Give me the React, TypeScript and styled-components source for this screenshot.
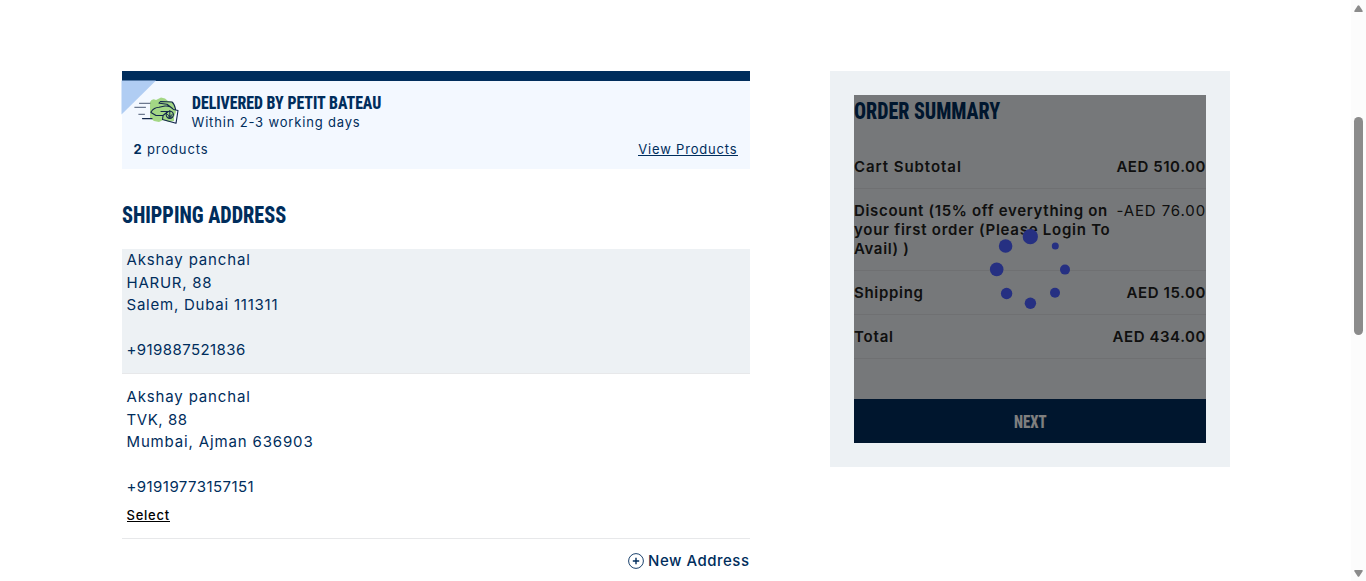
import React from 'react';
import styled, { createGlobalStyle } from 'styled-components';

const navy = '#002d5c';
const line = '#e7e8ea';

const GlobalStyle = createGlobalStyle`
  * { box-sizing: border-box; }
  body {
    margin: 0;
    background: #fff;
    color: ${navy};
    font-family: Inter, "Liberation Sans", sans-serif;
    font-size: 15px;
    overflow: hidden;
  }
`;

const Page = styled.div`
  display: flex;
  height: 581px;
  overflow: hidden;
`;

const Checkout = styled.main`
  flex: 1;
  display: flex;
  align-items: flex-start;
  gap: 80px;
  padding: 71px 0 0 122px;
`;

const Main = styled.div`
  width: 628px;
`;

const Text = styled.span<{ $track?: number }>`
  letter-spacing: ${(p) => p.$track ?? 0.7}px;
  white-space: nowrap;
`;

const Condensed = styled.span<{ $fit: number }>`
  display: inline-block;
  font-family: Roboto, "Liberation Sans", sans-serif;
  font-weight: 800;
  font-stretch: 75%;
  white-space: nowrap;
  transform: scaleX(${(p) => p.$fit});
  transform-origin: left center;
`;

const DeliveryCard = styled.section`
  position: relative;
  height: 98px;
  padding: 12px 12.5px 0 11.5px;
  border-top: 10px solid ${navy};
  background: #f3f8ff;
`;

const Corner = styled.svg`
  position: absolute;
  top: -1px;
  left: -1px;
`;

const DeliveryHead = styled.div`
  position: relative;
  display: flex;
  gap: 12px;
`;

const Truck = styled.svg`
  width: 46px;
  height: 32px;
  margin-top: 3px;
`;

const DeliveryText = styled.div`
  display: flex;
  flex-direction: column;
  font-size: 13px;
  line-height: 18px;
`;

const DeliveryTitle = styled.h3`
  margin: 0;
  font-size: 18px;
  line-height: 20px;
`;

const DeliveryFoot = styled.div`
  display: flex;
  justify-content: space-between;
  margin-top: 9px;
  font-size: 13px;
  line-height: 18px;
`;

const ProductsLink = styled.a`
  height: 16px;
  line-height: 18px;
  border-bottom: 1px solid ${navy};
`;

const Heading = styled.h2`
  margin: 0;
  height: 32px;
  font-size: 23px;
  line-height: 32px;
`;

const ShippingHeading = styled(Heading)`
  margin: 30px 0 18px;
`;

const Address = styled.article<{ $active?: boolean }>`
  display: flex;
  flex-direction: column;
  height: ${(p) => (p.$active ? 125 : 165)}px;
  padding: ${(p) => (p.$active ? 0 : 12)}px 4.5px 0;
  border-bottom: 1px solid ${line};
  background: ${(p) => (p.$active ? '#edf1f4' : 'transparent')};
  line-height: 22.5px;
`;

const Phone = styled.div`
  margin-top: 22.5px;
`;

const SelectLink = styled.a`
  align-self: flex-start;
  height: 15px;
  margin-top: 8.5px;
  border-bottom: 1px solid #000;
  color: #000;
  font-size: 13px;
  font-weight: 500;
  line-height: 17px;
`;

const NewAddress = styled.div`
  display: flex;
  justify-content: flex-end;
  align-items: center;
  gap: 4px;
  height: 22px;
  margin-top: 10px;
  padding-right: 0.5px;
  font-weight: 500;

  svg {
    margin-top: 2px;
  }
`;

const Summary = styled.aside`
  width: 400px;
  padding: 24px;
  background: #edf1f4;
`;

const SummaryBody = styled.div`
  position: relative;
  height: 348px;
`;

const Rows = styled.div`
  margin: 18px 0 40px;
`;

const Row = styled.div`
  display: flex;
  justify-content: space-between;
  padding: 12px 0;
  border-bottom: 1px solid #dfe1e4;
  color: #212121;
  font-weight: 600;
  line-height: 19px;
`;

const Label = styled.div`
  display: flex;
  flex-direction: column;
`;

const Amount = styled.div<{ $light?: boolean }>`
  font-weight: ${(p) => (p.$light ? 400 : 600)};
`;

const NextButton = styled.button`
  display: flex;
  justify-content: center;
  align-items: center;
  width: 100%;
  height: 44px;
  padding: 0 0 0 7px;
  border: 0;
  background: ${navy};
  color: #fff;
  font-size: 18px;
`;

const Loading = styled.div`
  position: absolute;
  inset: 0;
  display: flex;
  justify-content: center;
  align-items: center;
  background: rgba(0, 0, 0, 0.5);
`;

const Scrollbar = styled.div`
  display: flex;
  flex-direction: column;
  align-items: center;
  width: 15px;
  padding: 5px 0 4px;
  background: #fcfcfc;
`;

const Thumb = styled.div`
  width: 9px;
  height: 218px;
  margin: 105px 0 auto;
  border-radius: 5px;
  background: #8b8b8b;
`;

const dots = [
  [40.3, 7.7, 7.6], [65.3, 17, 3.5], [75, 40.6, 5], [65, 63.7, 5],
  [40.4, 74.3, 5.7], [16.6, 64.5, 5.7], [6.7, 40.4, 6.8], [15.6, 17, 6.8],
];

const Arrow = ({ down }: { down?: boolean }) => (
  <svg width="9" height="7" viewBox="0 0 9 7" fill="#8b8b8b">
    <path d={down ? 'M0.8 0H8.2Q9 .3 8.6 1.2L5.4 6.2Q4.5 7.4 3.6 6.2L.4 1.2Q0 .3.8 0Z' : 'M.8 7H8.2Q9 6.7 8.6 5.8L5.4.8Q4.5-.4 3.6.8L.4 5.8Q0 6.7.8 7Z'} />
  </svg>
);

const DeliveryIcon = () => (
  <Truck viewBox="0 0 46 32" fill="none" stroke="#12264b" strokeWidth="1.1" strokeLinecap="round" strokeLinejoin="round">
    <path d="M16 6Q18 2 22 4L27 1.5 31 2.5 34 5 39 6 41 11 42 16 40 21 40 25 35 26 29 24 25 26 20 25 16 22 16 17Z" fill="#a3d785" stroke="none" />
    <path d="M5.5 7.3H16M.8 11.3H11.5M4.8 18.3H10.5" strokeWidth="1" stroke="#4a5974" />
    <path d="M8.5 22.6H18" />
    <path d="M17 16Q20 11.5 25 11.3L31 10Q36 9.5 39.5 13.5L44 14.5 42 27.3 28.5 23.5 29 20M17 16.5 22 19.5H29L34 15.5 27 15.5M25 7.2 26.5 5.5 38 6Q40.5 8 41.5 13M25.5 7.2 33 8.2 38.5 12.5" />
    <circle cx="35.8" cy="18.8" r="3.6" />
    <path d="M35.8 14.5V21.5M33.5 18.5 36 20.5 38.2 18.5M34 21H38" strokeWidth="1" />
  </Truck>
);

const SummaryRow = ({ label, amount, light }: { label: [string, number][]; amount: [string, number]; light?: boolean }) => (
  <Row>
    <Label>
      {label.map(([text, track]) => <Text key={text} $track={track}>{text}</Text>)}
    </Label>
    <Amount $light={light}><Text $track={amount[1]}>{amount[0]}</Text></Amount>
  </Row>
);

export default function App() {
  return (
    <Page>
      <GlobalStyle />
      <Checkout>
        <Main>
          <DeliveryCard>
            <Corner width="35" height="35" viewBox="0 0 35 35"><path d="M.5.5H35L.5 34.5Z" fill="#b0cdf3" /></Corner>
            <DeliveryHead>
              <DeliveryIcon />
              <DeliveryText>
                <DeliveryTitle><Condensed $fit={0.878}>DELIVERED BY PETIT BATEAU</Condensed></DeliveryTitle>
                <Text $track={0.83}>Within 2-3 working days</Text>
              </DeliveryText>
            </DeliveryHead>
            <DeliveryFoot>
              <Text $track={0.85}><b>2</b> products</Text>
              <ProductsLink><Text $track={0.82}>View Products</Text></ProductsLink>
            </DeliveryFoot>
          </DeliveryCard>

          <ShippingHeading><Condensed $fit={0.876}>SHIPPING ADDRESS</Condensed></ShippingHeading>

          <Address $active>
            <Text $track={0.85}>Akshay panchal</Text>
            <Text $track={0.75}>HARUR, 88</Text>
            <Text $track={0.77}>Salem, Dubai 111311</Text>
            <Phone><Text $track={0.42}>+919887521836</Text></Phone>
          </Address>
          <Address>
            <Text $track={0.85}>Akshay panchal</Text>
            <Text $track={0.55}>TVK, 88</Text>
            <Text $track={0.85}>Mumbai, Ajman 636903</Text>
            <Phone><Text $track={0.43}>+91919773157151</Text></Phone>
            <SelectLink><Text $track={0.75}>Select</Text></SelectLink>
          </Address>

          <NewAddress>
            <svg width="16" height="16" viewBox="0 0 16 16" fill="none" stroke={navy}>
              <circle cx="8" cy="8" r="7.4" strokeWidth=".9" />
              <path d="M8 4.8V11.2M4.8 8H11.2" strokeWidth="1.4" />
            </svg>
            <Text $track={0.5}>New Address</Text>
          </NewAddress>
        </Main>

        <Summary>
          <SummaryBody>
            <Heading><Condensed $fit={0.866}>ORDER SUMMARY</Condensed></Heading>
            <Rows>
              <SummaryRow label={[['Cart Subtotal', 0.95]]} amount={['AED 510.00', 0.56]} />
              <SummaryRow
                label={[['Discount (15% off everything on', 0.68], ['your first order (Please Login To', 0.74], ['Avail) )', 0.65]]}
                amount={['-AED 76.00', 0.88]}
                light
              />
              <SummaryRow label={[['Shipping', 0.7]]} amount={['AED 15.00', 0.58]} />
              <SummaryRow label={[['Total', 0.8]]} amount={['AED 434.00', 0.56]} />
            </Rows>
            <NextButton><Condensed $fit={0.82}>NEXT</Condensed></NextButton>
            <Loading>
              <svg width="80" height="80" viewBox="0 0 80 80" fill="#263082" overflow="visible">
                {dots.map(([x, y, r]) => <circle key={`${x}-${y}`} cx={x} cy={y} r={r} />)}
              </svg>
            </Loading>
          </SummaryBody>
        </Summary>
      </Checkout>
      <Scrollbar>
        <Arrow />
        <Thumb />
        <Arrow down />
      </Scrollbar>
    </Page>
  );
}
